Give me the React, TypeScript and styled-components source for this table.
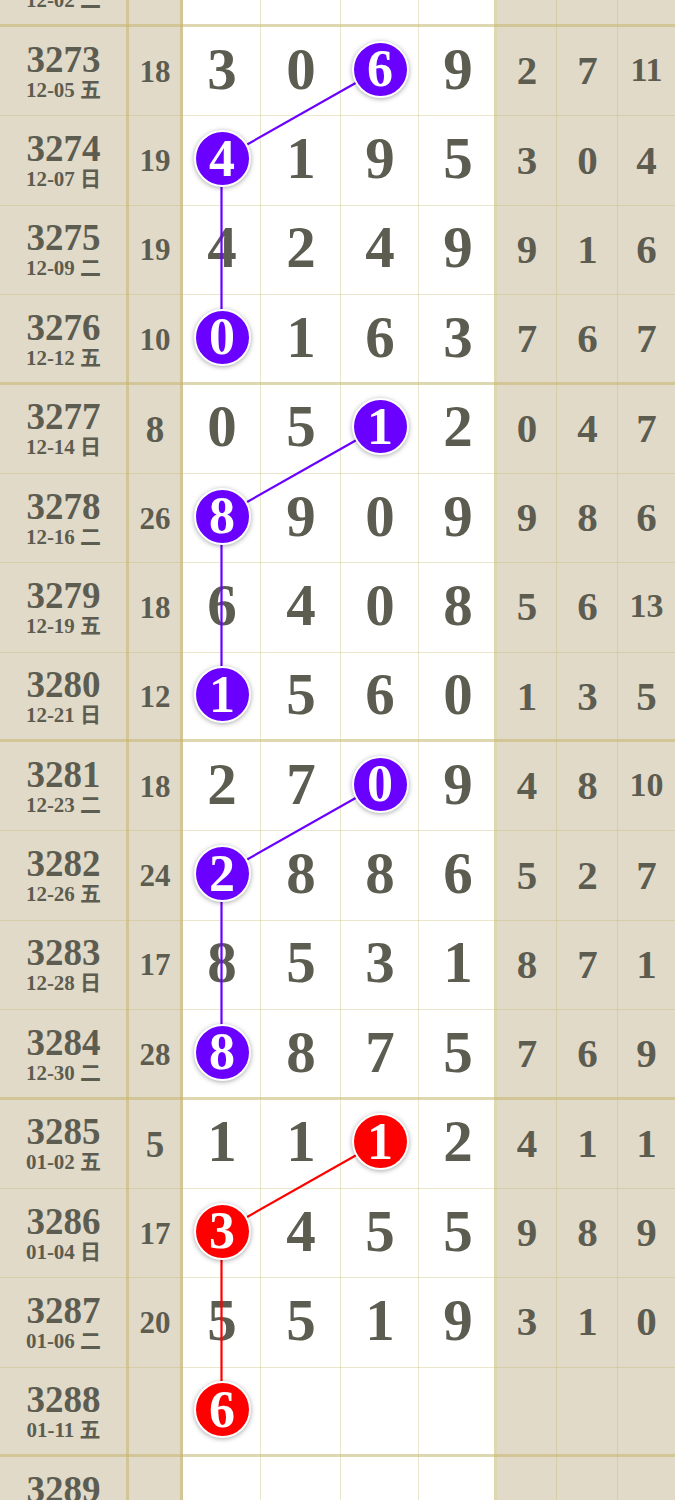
import React from 'react';
import styled, { createGlobalStyle } from 'styled-components';

const GlobalStyle = createGlobalStyle`
  html, body {
    margin: 0;
    padding: 0;
    background: #ffffff;
  }
  body {
    font-family: "Liberation Serif", "Noto Sans CJK SC", serif;
  }
`;

//----GRID---SETUP----//
const ROW_H = 89.375;
const COLS = [129, 54, 78, 80, 78, 78, 60, 61, 57];
const COL_LINES = [3, 3, 1, 1, 1, 3, 1, 1, 0];
const LINE_STRONG = 'rgba(196, 182, 110, 0.55)';
const LINE_SOFT = 'rgba(196, 182, 110, 0.35)';
const BEIGE = '#e2dac9';
const INK = '#5c5d50';
const PURPLE = '#6a00ff';
const RED = '#ff0000';
const BALL_OFFSET = (ROW_H - 5) / 2;

type Draw = {
  period: number;
  date: string;
  sum?: number;
  nums: (number | null)[];
  ext: number[];
  ball?: number;
};

const draws: Draw[] = [
  { period: 3272, date: '12-02 二', sum: 11, nums: [3, 1, 1, 6], ext: [5, 2, 4] },
  { period: 3273, date: '12-05 五', sum: 18, nums: [3, 0, 6, 9], ext: [2, 7, 11], ball: 2 },
  { period: 3274, date: '12-07 日', sum: 19, nums: [4, 1, 9, 5], ext: [3, 0, 4], ball: 0 },
  { period: 3275, date: '12-09 二', sum: 19, nums: [4, 2, 4, 9], ext: [9, 1, 6] },
  { period: 3276, date: '12-12 五', sum: 10, nums: [0, 1, 6, 3], ext: [7, 6, 7], ball: 0 },
  { period: 3277, date: '12-14 日', sum: 8, nums: [0, 5, 1, 2], ext: [0, 4, 7], ball: 2 },
  { period: 3278, date: '12-16 二', sum: 26, nums: [8, 9, 0, 9], ext: [9, 8, 6], ball: 0 },
  { period: 3279, date: '12-19 五', sum: 18, nums: [6, 4, 0, 8], ext: [5, 6, 13] },
  { period: 3280, date: '12-21 日', sum: 12, nums: [1, 5, 6, 0], ext: [1, 3, 5], ball: 0 },
  { period: 3281, date: '12-23 二', sum: 18, nums: [2, 7, 0, 9], ext: [4, 8, 10], ball: 2 },
  { period: 3282, date: '12-26 五', sum: 24, nums: [2, 8, 8, 6], ext: [5, 2, 7], ball: 0 },
  { period: 3283, date: '12-28 日', sum: 17, nums: [8, 5, 3, 1], ext: [8, 7, 1] },
  { period: 3284, date: '12-30 二', sum: 28, nums: [8, 8, 7, 5], ext: [7, 6, 9], ball: 0 },
  { period: 3285, date: '01-02 五', sum: 5, nums: [1, 1, 1, 2], ext: [4, 1, 1], ball: 2 },
  { period: 3286, date: '01-04 日', sum: 17, nums: [3, 4, 5, 5], ext: [9, 8, 9], ball: 0 },
  { period: 3287, date: '01-06 二', sum: 20, nums: [5, 5, 1, 9], ext: [3, 1, 0] },
  { period: 3288, date: '01-11 五', nums: [6, null, null, null], ext: [], ball: 0 },
  { period: 3289, date: '01-13 日', nums: [], ext: [] },
];

const ballColor = (period: number) => (period >= 3285 ? RED : PURPLE);
const groupOf = (period: number) => Math.floor((period - 3273) / 4);
const isGroupEnd = (period: number) => (period - 3272) % 4 === 0;
const isWide = (v?: number) => v !== undefined && v >= 10;

const colLeft = (i: number) => COLS.slice(0, i).reduce((a, b) => a + b, 0);
const colCenter = (i: number) => colLeft(i) + (COLS[i] - COL_LINES[i]) / 2;

const TrendLines: React.FC = () => {
  const segments: { x1: number; y1: number; x2: number; y2: number; color: string }[] = [];
  let prev: { x: number; y: number; group: number } | null = null;
  draws.forEach((d, i) => {
    if (d.ball === undefined) return;
    const x = colCenter(2 + d.ball);
    const y = i * ROW_H + BALL_OFFSET;
    const group = groupOf(d.period);
    if (prev && prev.group === group) {
      segments.push({ x1: prev.x, y1: prev.y, x2: x, y2: y, color: ballColor(d.period) });
    }
    prev = { x, y, group };
  });

  return (
    <TrendLayer width={675} height={draws.length * ROW_H}>
      {segments.map((s, i) => (
        <line key={i} x1={s.x1} y1={s.y1} x2={s.x2} y2={s.y2} stroke={s.color} strokeWidth={2.2} />
      ))}
    </TrendLayer>
  );
};

const App: React.FC = () => {
  return (
    <>
      <GlobalStyle />
      <Board>
        {draws.map((d) => {
          const thick = isGroupEnd(d.period);
          return (
            <Row key={d.period}>
              <PeriodCell $right={COL_LINES[0]} $thick={thick}>
                <Issue>{d.period}</Issue>
                <DateLine>{d.date}</DateLine>
              </PeriodCell>
              <SumCell $right={COL_LINES[1]} $thick={thick} $wide={isWide(d.sum)}>
                {d.sum ?? ''}
              </SumCell>
              {[0, 1, 2, 3].map((k) => (
                <NumCell key={k} $right={COL_LINES[2 + k]} $thick={thick}>
                  {d.ball === k ? (
                    <Ball $color={ballColor(d.period)}>{d.nums[k]}</Ball>
                  ) : (
                    d.nums[k] ?? ''
                  )}
                </NumCell>
              ))}
              {[0, 1, 2].map((k) => (
                <ExtCell key={k} $right={COL_LINES[6 + k]} $thick={thick} $wide={isWide(d.ext[k])}>
                  {d.ext[k] ?? ''}
                </ExtCell>
              ))}
            </Row>
          );
        })}
        <TrendLines />
      </Board>
    </>
  );
};

const Board = styled.div`
  position: relative;
  width: 675px;
  margin-top: -62.375px;
`;

const Row = styled.div`
  display: grid;
  grid-template-columns: ${COLS.map((c) => `${c}px`).join(' ')};
  height: ${ROW_H}px;
`;

const Cell = styled.div<{ $right: number; $thick: boolean }>`
  display: flex;
  align-items: center;
  justify-content: center;
  box-sizing: border-box;
  height: ${ROW_H}px;
  color: ${INK};
  font-weight: 700;
  box-shadow:
    inset -${(p) => p.$right}px 0 0 ${(p) => (p.$right >= 3 ? LINE_STRONG : LINE_SOFT)},
    inset 0 -${(p) => (p.$thick ? 3 : 1)}px 0 ${(p) => (p.$thick ? LINE_STRONG : LINE_SOFT)};
`;

const PeriodCell = styled(Cell)`
  flex-direction: column;
  background: ${BEIGE};
  padding-right: 2px;
`;

const Issue = styled.div`
  font-size: 37px;
  line-height: 36px;
  font-weight: 700;
`;

const DateLine = styled.div`
  font-size: 21px;
  line-height: 24px;
  font-weight: 700;
  white-space: nowrap;
`;

const SumCell = styled(Cell)<{ $wide: boolean }>`
  background: ${BEIGE};
  font-size: ${(p) => (p.$wide ? 31 : 37)}px;
  padding-right: 2px;
`;

const NumCell = styled(Cell)`
  background: #ffffff;
  font-size: 59px;
  padding-bottom: 5px;
`;

const ExtCell = styled(Cell)<{ $wide: boolean }>`
  background: ${BEIGE};
  font-size: ${(p) => (p.$wide ? 34 : 41)}px;
  padding-bottom: 3px;
`;

const Ball = styled.span<{ $color: string }>`
  position: relative;
  z-index: 2;
  display: flex;
  align-items: center;
  justify-content: center;
  box-sizing: border-box;
  width: 57px;
  height: 57px;
  border-radius: 50%;
  border: 2.5px solid #ffffff;
  background: ${(p) => p.$color};
  box-shadow: 0 1px 5px rgba(0, 0, 0, 0.35);
  color: #ffffff;
  font-size: 52px;
  line-height: 1;
`;

const TrendLayer = styled.svg`
  position: absolute;
  top: 0;
  left: 0;
  z-index: 1;
  pointer-events: none;
`;

export default App;
